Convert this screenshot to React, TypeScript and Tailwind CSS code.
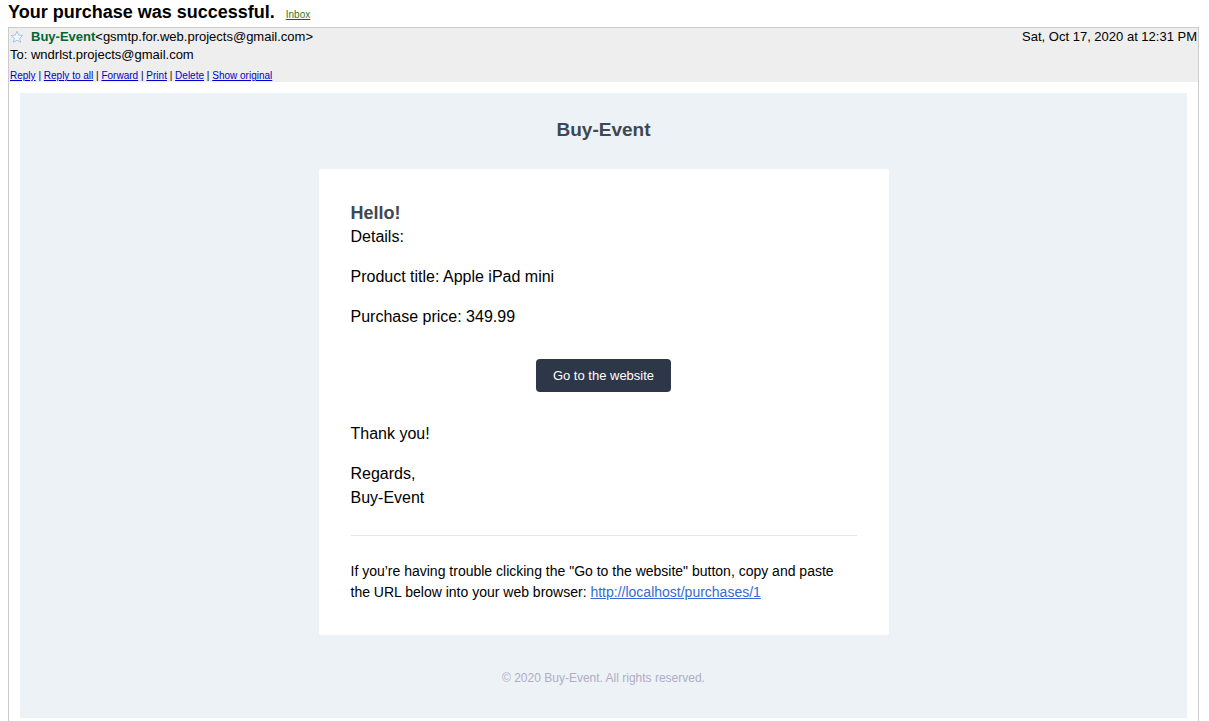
import React from "react";

function Star() {
  return (
    <svg width="14" height="14" viewBox="0 0 24 24" className="shrink-0">
      <path
        d="M12 2.2l2.9 6.5 7 .7-5.3 4.7 1.6 6.9L12 17.4 5.8 21l1.6-6.9L2.1 9.4l7-.7z"
        fill="#f3f7fd"
        stroke="#9ec0ea"
        strokeWidth="1.6"
        strokeLinejoin="round"
      />
    </svg>
  );
}

export default function App() {
  const links = ["Reply", "Reply to all", "Forward", "Print", "Delete", "Show original"];
  return (
    <div className="font-['Liberation_Sans',Arial,sans-serif] text-black bg-white min-h-screen">
      <div className="h-[27px] px-2 pt-[1px] flex items-baseline gap-[11px]">
        <span className="text-[18px] font-bold leading-[22px]">Your purchase was successful.</span>
        <span className="text-[10px] text-[#337722] underline decoration-[#006633]">Inbox</span>
      </div>
      <div className="ml-2 mr-[10px] border border-b-0 border-[#cccccc]">
        <div className="bg-[#eeeeee] h-[54px] px-[1px] text-[13px]">
          <div className="h-[18px] flex items-center justify-between">
            <div className="flex items-center">
              <Star />
              <span className="ml-[7px] font-bold text-[#006633]">Buy-Event</span>
              <span>&lt;gsmtp.for.web.projects@gmail.com&gt;</span>
            </div>
            <span>Sat, Oct 17, 2020 at 12:31 PM</span>
          </div>
          <div className="h-[17px] flex items-center">To: wndrlst.projects@gmail.com</div>
          <div className="h-[19px] flex items-end text-[10px] leading-[13px]">
            {links.map((l, i) => (
              <React.Fragment key={l}>
                {i > 0 && <span className="px-[2.8px]">|</span>}
                <span className="text-[#0000cc] underline">{l}</span>
              </React.Fragment>
            ))}
          </div>
        </div>
        <div className="p-[11px]">
          <div className="bg-[#edf2f7]">
            <div className="h-[76px] flex items-center justify-center pb-[2px]">
              <span className="text-[19px] font-bold text-[#3d4852]">Buy-Event</span>
            </div>
            <div className="w-[570px] mx-auto bg-white rounded-[2px] px-8 pt-[33px] pb-8">
              <h1 className="text-[18px] font-bold text-[#3d4852] leading-[23px]">Hello!</h1>
              <p className="text-[16px] leading-[24px] mb-4">Details:</p>
              <p className="text-[16px] leading-[24px] mb-4">Product title: Apple iPad mini</p>
              <p className="text-[16px] leading-[24px]">Purchase price: 349.99</p>
              <div className="flex justify-center mt-[30px] mb-[30px]">
                <span className="h-[33px] px-[17px] flex items-center bg-[#2d3748] text-white text-[13px] rounded-[4px]">
                  Go to the website
                </span>
              </div>
              <p className="text-[16px] leading-[24px] mb-4">Thank you!</p>
              <p className="text-[16px] leading-[24px]">
                Regards,
                <br />
                Buy-Event
              </p>
              <div className="mt-[25px] border-t border-[#e8e5ef] pt-[25px]">
                <p className="text-[14px] leading-[21px]">
                  If you’re having trouble clicking the "Go to the website" button, copy and paste
                  the URL below into your web browser:{" "}
                  <span className="text-[#3869d4] underline">http://localhost/purchases/1</span>
                </p>
              </div>
            </div>
            <div className="pt-[34px] pb-[31px] text-center text-[12px] leading-[18px] text-[#b0adc5]">
              © 2020 Buy-Event. All rights reserved.
            </div>
          </div>
        </div>
      </div>
    </div>
  );
}
